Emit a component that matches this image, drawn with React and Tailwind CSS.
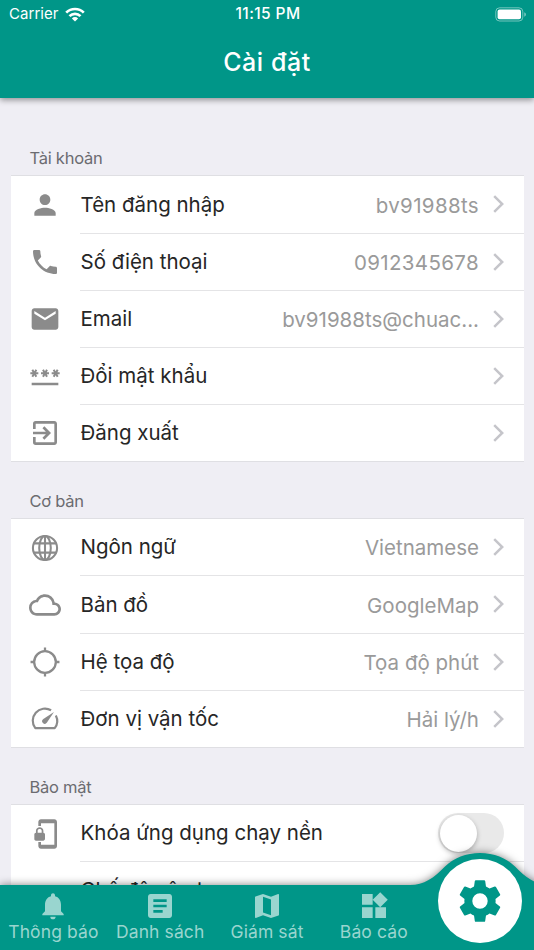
import {
  MdArticle,
  MdCloudQueue,
  MdEmail,
  MdExitToApp,
  MdMap,
  MdNotifications,
  MdPassword,
  MdPerson,
  MdPhonelinkLock,
  MdWidgets,
} from "react-icons/md";

function PhoneIcon({ className }) {
  return (
    <svg viewBox="0 0 24 24" fill="currentColor" className={className}>
      <path d="M6.62 10.79c1.44 2.83 3.76 5.14 6.59 6.59l2.2-2.2c.27-.27.67-.36 1.02-.24 1.12.37 2.33.57 3.57.57.55 0 1 .45 1 1V20c0 .55-.45 1-1 1-9.39 0-17-7.61-17-17 0-.55.45-1 1-1h3.5c.55 0 1 .45 1 1 0 1.25.2 2.45.57 3.57.11.35.03.74-.25 1.02l-2.2 2.2z" />
    </svg>
  );
}

function GearIcon({ className }) {
  return (
    <svg viewBox="0 0 24 24" fill="currentColor" className={className}>
      <path d="M19.43 12.98c.04-.32.07-.64.07-.98s-.03-.66-.07-.98l2.11-1.65c.19-.15.24-.42.12-.64l-2-3.46c-.12-.22-.39-.3-.61-.22l-2.49 1c-.52-.4-1.08-.73-1.69-.98l-.38-2.65C14.46 2.18 14.25 2 14 2h-4c-.25 0-.46.18-.49.42l-.38 2.65c-.61.25-1.17.59-1.69.98l-2.49-1c-.23-.09-.49 0-.61.22l-2 3.46c-.13.22-.07.49.12.64l2.11 1.65c-.04.32-.07.65-.07.98s.03.66.07.98l-2.11 1.65c-.19.15-.24.42-.12.64l2 3.46c.12.22.39.3.61.22l2.49-1c.52.4 1.08.73 1.69.98l.38 2.65c.03.24.24.42.49.42h4c.25 0 .46-.18.49-.42l.38-2.65c.61-.25 1.17-.59 1.69-.98l2.49 1c.23.09.49 0 .61-.22l2-3.46c.12-.22.07-.49-.12-.64l-2.11-1.65zM12 15.7a3.7 3.7 0 1 1 0-7.4 3.7 3.7 0 0 1 0 7.4z" />
    </svg>
  );
}

function GlobeIcon({ className }) {
  return (
    <svg viewBox="0 0 31 31" fill="none" stroke="currentColor" strokeWidth="2" className={className}>
      <circle cx="15.5" cy="15.5" r="11.7" />
      <ellipse cx="15.5" cy="15.5" rx="5.6" ry="11.7" />
      <path d="M15.5 3.5v24M4.5 11h22M4.5 20h22" />
    </svg>
  );
}

function CrosshairIcon({ className }) {
  return (
    <svg viewBox="0 0 31 31" fill="none" stroke="currentColor" strokeWidth="2.2" className={className}>
      <circle cx="15.5" cy="15.5" r="10.5" />
      <path d="M15.5 1.5v4M15.5 25.5v4M1.5 15.5h4M25.5 15.5h4" />
    </svg>
  );
}

function GaugeIcon({ className }) {
  return (
    <svg viewBox="0 0 31 31" className={className}>
      <path
        d="M21.4 7A11.8 11.8 0 0 0 6.1 24.4H24.9A11.8 11.8 0 0 0 26 12"
        fill="none"
        stroke="currentColor"
        strokeWidth="2.1"
        strokeLinejoin="round"
      />
      <path d="M24.2 8.6 17.4 18.9a2.6 2.6 0 0 1-3.9.4 2.6 2.6 0 0 1 .4-3.9z" fill="currentColor" />
    </svg>
  );
}

const sections = [
  {
    title: "Tài khoản",
    rows: [
      { icon: MdPerson, label: "Tên đăng nhập", value: "bv91988ts", numeric: true },
      { icon: PhoneIcon, label: "Số điện thoại", value: "0912345678", numeric: true },
      { icon: MdEmail, label: "Email", value: "bv91988ts@chuac..." },
      { icon: MdPassword, label: "Đổi mật khẩu" },
      { icon: MdExitToApp, label: "Đăng xuất" },
    ],
  },
  {
    title: "Cơ bản",
    rows: [
      { icon: GlobeIcon, label: "Ngôn ngữ", value: "Vietnamese" },
      { icon: MdCloudQueue, label: "Bản đồ", value: "GoogleMap" },
      { icon: CrosshairIcon, label: "Hệ tọa độ", value: "Tọa độ phút" },
      { icon: GaugeIcon, label: "Đơn vị vận tốc", value: "Hải lý/h" },
    ],
  },
  {
    title: "Bảo mật",
    rows: [
      { icon: MdPhonelinkLock, label: "Khóa ứng dụng chạy nền", toggle: true },
      { label: "Chế độ vân tay", toggle: true },
    ],
  },
];

const tabs = [
  { icon: MdNotifications, label: "Thông báo" },
  { icon: MdArticle, label: "Danh sách" },
  { icon: MdMap, label: "Giám sát" },
  { icon: MdWidgets, label: "Báo cáo" },
];

function StatusBar() {
  return (
    <div className="grid h-[28px] grid-cols-3 items-center pr-[7px] pl-[9px]">
      <div className="flex items-center gap-[6px]">
        <span className="text-[15px] tracking-[0.05px]">Carrier</span>
        <svg viewBox="0 0 20 15" className="h-[15px] w-5" fill="none" stroke="currentColor" strokeWidth="2.7">
          <path d="M1.2 5.6a12.6 12.6 0 0 1 17.6 0M4.5 9.1a7.8 7.8 0 0 1 11 0" />
          <path d="M6.9 11.4a4.4 4.4 0 0 1 6.2 0L10 14.6z" fill="currentColor" stroke="none" />
        </svg>
      </div>
      <span className="text-center text-[15.5px] font-medium tracking-[0.4px] whitespace-nowrap">11:15 PM</span>
      <svg viewBox="0 0 32 15" className="h-[15px] w-8 justify-self-end" fill="none">
        <rect x="0.8" y="0.8" width="27" height="13.2" rx="3.8" stroke="white" strokeOpacity="0.45" />
        <rect x="2.6" y="2.6" width="23.4" height="9.6" rx="2" fill="white" />
        <path d="M29.3 5.2v4.5c1-.4 1.6-1.2 1.6-2.2s-.6-1.9-1.6-2.3z" fill="white" fillOpacity="0.5" />
      </svg>
    </div>
  );
}

function Toggle() {
  return (
    <div className="mr-[19.5px] h-10 w-[66px] shrink-0 rounded-full bg-[#e9e9e9] p-[1.5px]">
      <div className="size-[37px] rounded-full bg-white shadow-[0_2px_5px_rgba(0,0,0,0.28)]" />
    </div>
  );
}

function Row({ icon: Icon, label, value, numeric, toggle, last }) {
  return (
    <li className={`flex h-[57.15px] ${last ? "border-b border-[#dfdfe3]" : ""}`}>
      <div className="flex w-[69.5px] shrink-0 items-center justify-center text-[#8b8b8b]">
        {Icon && <Icon className="size-[32px]" />}
      </div>
      <div className={`flex flex-1 items-center justify-between ${last ? "" : "border-b border-[#e4e4e6]"}`}>
        <span className="pt-px pl-[0.5px] text-[20.5px] text-[#262626]">{label}</span>
        {toggle ? (
          <Toggle />
        ) : (
          <div className="flex items-center gap-[13.5px] pr-[19px]">
            <span
              className={`pt-[3px] text-[20.5px] text-[#9a9a9a] ${numeric ? "tracking-[0.35px]" : "tracking-normal"}`}
            >
              {value}
            </span>
            <svg viewBox="0 0 12 20" className="h-5 w-3" fill="none" stroke="#c5c5ca" strokeWidth="2.5">
              <path d="M1.2 2.1 9.2 10l-8 7.9" />
            </svg>
          </div>
        )}
      </div>
    </li>
  );
}

function Section({ title, rows }) {
  return (
    <section>
      <h2 className="flex h-[57.15px] items-end pb-[5.5px] pl-[19px] text-[16.5px] tracking-[-0.25px] text-[#6b6b70]">
        {title}
      </h2>
      <ul className="-mt-px border-t border-[#dfdfe3] bg-white">
        {rows.map((row, i) => (
          <Row key={row.label} {...row} last={i === rows.length - 1} />
        ))}
      </ul>
    </section>
  );
}

function TabBar() {
  return (
    <nav className="absolute inset-x-0 bottom-0 h-[97px]">
      <svg
        viewBox="0 0 534 97"
        className="absolute inset-0 h-[97px] w-[534px] overflow-visible drop-shadow-[0_0_4px_rgba(0,0,0,0.5)]"
      >
        <path
          d="M0 32H410C424 32 434 25 445 13.5C454 5 466 0 480 0S506 5 515 13.5C526 25 536 32 550 32V97H0z"
          fill="#009688"
        />
      </svg>
      <div className="relative grid h-full grid-cols-5">
        {tabs.map(({ icon: Icon, label }) => (
          <a key={label} className="flex flex-col items-center pt-[36.5px] text-[#99d5cf]">
            <Icon className="size-8" />
            <span className="text-[17.5px] leading-[19px] tracking-[0.1px] whitespace-nowrap">{label}</span>
          </a>
        ))}
        <div className="flex justify-center pt-[6px] pr-px">
          <div className="flex size-[84px] items-center justify-center rounded-full bg-white text-[#009688]">
            <GearIcon className="size-[50px]" />
          </div>
        </div>
      </div>
    </nav>
  );
}

export default function App() {
  return (
    <div className="relative flex h-[950px] w-[534px] flex-col overflow-hidden bg-[#efeef4] font-['Inter',sans-serif]">
      <header className="relative h-[98px] shrink-0 bg-[#009688] text-white shadow-[0_2px_6px_rgba(0,0,0,0.4)]">
        <StatusBar />
        <h1 className="pt-[16px] text-center text-[25px] leading-[36px] font-medium tracking-[0.55px]">Cài đặt</h1>
      </header>
      <main className="flex flex-col px-[10.5px] pt-[21.25px]">
        {sections.map((section) => (
          <Section key={section.title} {...section} />
        ))}
      </main>
      <TabBar />
    </div>
  );
}
